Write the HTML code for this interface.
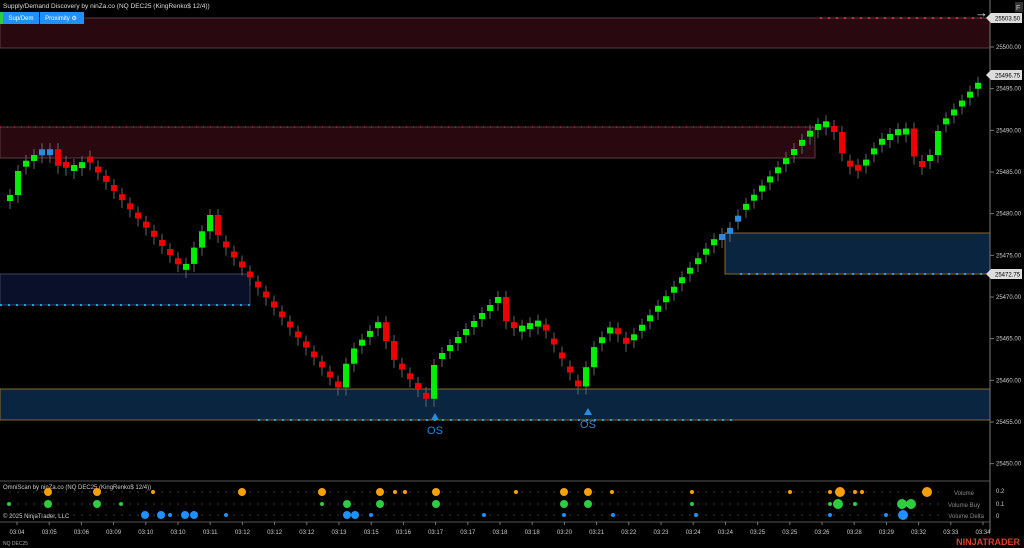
<!DOCTYPE html>
<html><head><meta charset="utf-8"><style>
html,body{margin:0;background:#000;width:1024px;height:548px;overflow:hidden;font-family:"Liberation Sans",sans-serif}
svg{display:block;overflow:hidden}
</style></head><body>
<svg id="s" width="1024" height="548" xmlns="http://www.w3.org/2000/svg" font-family="Liberation Sans, sans-serif">
<rect width="1024" height="548" fill="#000"/>
<rect x="0" y="18" width="990" height="30" fill="#2a0810" stroke="#5a3a40" stroke-width="1"/>
<rect x="0" y="127" width="815" height="31" fill="#2a0810" stroke="#5a3a40" stroke-width="1"/>
<rect x="0" y="274" width="250" height="31" fill="#0a0f2a" stroke="#3a4060" stroke-width="1"/>
<rect x="0" y="389" width="990" height="31" fill="#0a2540" stroke="#8a6a2a" stroke-width="1"/>
<rect x="725" y="233" width="265" height="41" fill="#0a2540" stroke="#8a6a2a" stroke-width="1"/>
<line x1="820" y1="18" x2="990" y2="18" stroke="#e0203a" stroke-width="2" stroke-dasharray="2,6"/>
<line x1="0" y1="127" x2="815" y2="127" stroke="#c02040" stroke-width="1.5" stroke-dasharray="1,6"/>
<line x1="0" y1="305" x2="250" y2="305" stroke="#20a0d0" stroke-width="2" stroke-dasharray="2,6"/>
<line x1="258" y1="420" x2="735" y2="420" stroke="#20a0d0" stroke-width="2" stroke-dasharray="2,6"/>
<line x1="740" y1="274" x2="990" y2="274" stroke="#20a0d0" stroke-width="2" stroke-dasharray="2,6"/>
<g id="c"></g>
<polygon points="435,413 431,420 439,420" fill="#2a8ae0"/>
<text x="435" y="434" font-size="11" fill="#2a8ae0" text-anchor="middle">OS</text>
<polygon points="588,408 584,415 592,415" fill="#2a8ae0"/>
<text x="588" y="428" font-size="11" fill="#2a8ae0" text-anchor="middle">OS</text>
<text x="3" y="8" font-size="6.5" fill="#ddd">Supply/Demand Discovery by ninZa.co (NQ DEC25 (KingRenko$ 12/4))</text>
<rect x="0" y="12" width="3" height="12" fill="#2ecc40"/>
<rect x="3" y="12" width="36" height="12" fill="#1e90ff"/>
<rect x="40" y="12" width="44" height="12" fill="#1e90ff"/>
<text x="21" y="20" font-size="6" fill="#fff" text-anchor="middle">Sup/Dem</text>
<text x="61" y="20" font-size="6" fill="#fff" text-anchor="middle">Proximity ⚙</text>
<text x="975" y="17" font-size="13" fill="#ddd">→</text>
<rect x="1015" y="2" width="8" height="10" fill="#333"/><text x="1016" y="10" font-size="7" fill="#ccc">F</text>
<line x1="990" y1="0" x2="990" y2="532" stroke="#777"/>
<g id="ax" font-size="6" fill="#ccc"></g>
<line x1="0" y1="481" x2="990" y2="481" stroke="#555"/>
<line x1="0" y1="522" x2="990" y2="522" stroke="#555"/>
<text x="3" y="489" font-size="6" fill="#ccc">OmniScan by ninZa.co (NQ DEC25 (KingRenko$ 12/4))</text>
<text x="3" y="518" font-size="6" fill="#ccc">© 2025 NinjaTrader, LLC</text>
<text x="974" y="495" font-size="6" fill="#888" text-anchor="end">Volume</text>
<text x="980" y="507" font-size="6" fill="#888" text-anchor="end">Volume Buy</text>
<text x="984" y="518" font-size="6" fill="#888" text-anchor="end">Volume Delta</text>
<g font-size="6" fill="#ccc"><text x="996" y="493">0.2</text><text x="996" y="506">0.1</text><text x="996" y="518">0</text></g>
<g id="b"></g>
<g id="t" font-size="6" fill="#ccc" text-anchor="middle"></g>
<text x="3" y="545" font-size="5" fill="#aaa">NQ DEC25</text>
<text x="1020" y="545" font-size="9" font-weight="bold" fill="#e0402a" text-anchor="end">NINJATRADER</text>
</svg>
<script>
(function(){
var NS="http://www.w3.org/2000/svg";
function el(p,t,a,txt){var e=document.createElementNS(NS,t);for(var k in a)e.setAttribute(k,a[k]);if(txt)e.textContent=txt;document.getElementById(p).appendChild(e);return e;}
for(var p=25500;p>=25450;p-=5){var y=47+(25500-p)*8.333;el("ax","line",{x1:990,y1:y,x2:994,y2:y,stroke:"#777"});el("ax","text",{x:996,y:y+2},p.toFixed(2));}
[[18,"25503.50"],[75,"25496.75"],[274,"25472.75"]].forEach(function(a){el("ax","polygon",{points:"986,"+a[0]+" 991,"+(a[0]-5)+" 1022,"+(a[0]-5)+" 1022,"+(a[0]+5)+" 991,"+(a[0]+5),fill:"#ddd"});el("ax","text",{x:995,y:a[0]+2.5,fill:"#000"},a[1]);});
var W=[[10,195],[20,165],[48,145],[60,170],[88,160],[100,175],[183,270],[210,215],[220,240],[340,390],[348,355],[380,320],[390,355],[427,400],[435,360],[500,295],[508,330],[540,320],[580,390],[590,352],[612,325],[625,345],[715,238],[722,240],[745,205],[815,125],[830,120],[840,150],[855,175],[880,140],[905,125],[915,160],[925,170],[940,125],[985,75]];
var prev=null;
for(var x=10;x<=985;x+=8){
 var i=0;while(i<W.length-2&&W[i+1][0]<x)i++;
 var a=W[i],b=W[i+1];var y=a[1]+(b[1]-a[1])*Math.min(1,Math.max(0,(x-a[0])/(b[0]-a[0])));
 var up=prev===null?true:y<prev;var h=6;
 var col=up?"#00ee00":"#ee0000";if(x>=722&&x<=745)col="#2a8ae0";if(x>=40&&x<=50)col="#2a8ae0";
 var ty=up?y:y-h, hh=h;
 if(prev!==null&&Math.abs(y-prev)>14){ty=Math.min(y,prev);hh=Math.abs(y-prev);}
 el("c","line",{x1:x,y1:ty-6,x2:x,y2:ty+hh+8,stroke:"#666","stroke-width":1});
 el("c","rect",{x:x-3,y:ty,width:6,height:hh,fill:col});
 prev=y;
}
for(var x2=10;x2<=940;x2+=8){[492,504,515].forEach(function(yy){el("b","circle",{cx:x2,cy:yy,r:0.6,fill:"#666"});});}
var O=[[48,4],[97,4],[153,2],[242,4],[322,4],[380,4],[395,2],[405,2],[436,4],[516,2],[564,4],[588,4],[612,2],[692,2],[790,2],[830,2],[840,5],[855,2],[862,2],[927,5]];
var G=[[9,2],[48,4],[97,4],[121,2],[322,2],[347,4],[380,4],[436,4],[564,4],[588,4],[692,2],[830,2],[838,5],[855,2],[902,5],[911,5]];
var B=[[145,4],[161,4],[170,2],[185,4],[194,4],[226,2],[347,4],[355,4],[371,2],[484,2],[564,2],[613,2],[696,2],[830,2],[886,2],[903,5]];
O.forEach(function(a){el("b","circle",{cx:a[0],cy:492,r:a[1],fill:"#f5a00a"});});
G.forEach(function(a){el("b","circle",{cx:a[0],cy:504,r:a[1],fill:"#2ecc40"});});
B.forEach(function(a){el("b","circle",{cx:a[0],cy:515,r:a[1],fill:"#1e90ff"});});
var T=["03:04","03:05","03:06","03:09","03:10","03:10","03:11","03:12","03:12","03:12","03:13","03:15","03:16","03:17","03:17","03:18","03:18","03:20","03:21","03:22","03:23","03:24","03:24","03:25","03:25","03:26","03:28","03:29","03:32","03:33","03:34"];
T.forEach(function(s,i){var xx=17+i*32.2;el("t","line",{x1:xx,y1:522,x2:xx,y2:525,stroke:"#777"});el("t","text",{x:xx,y:534},s);});
})();
</script>
</body></html>
